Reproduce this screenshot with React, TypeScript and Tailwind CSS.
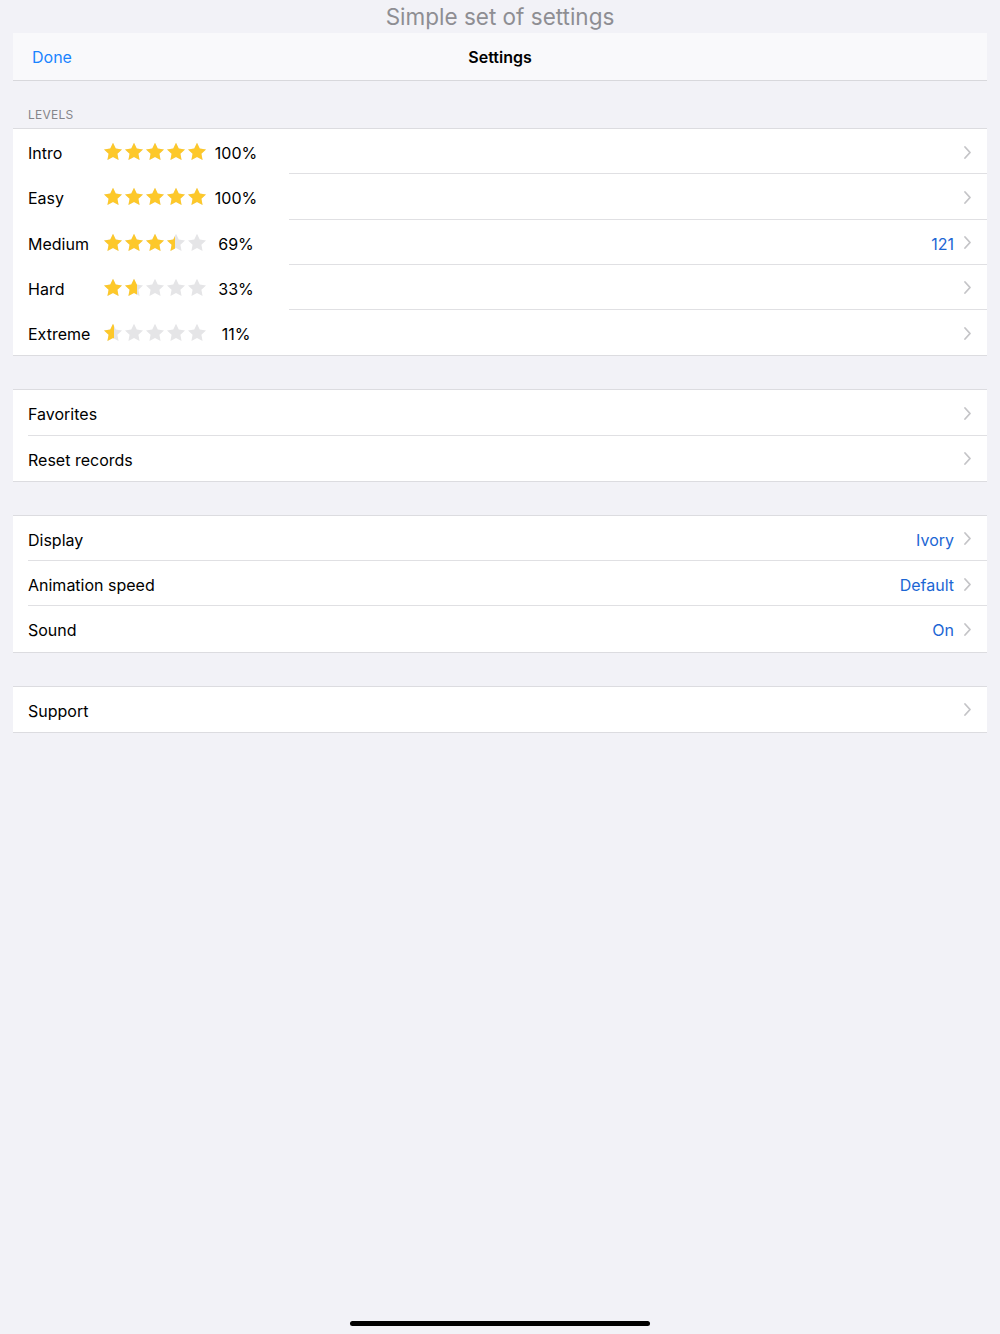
import React from 'react';

const font = { fontFamily: 'Inter, "Noto Sans", "Liberation Sans", sans-serif' };

interface Level {
    name: string;
    pct: number;
    value?: string;
}

const levels: Level[] = [
    { name: 'Intro', pct: 100 },
    { name: 'Easy', pct: 100 },
    { name: 'Medium', pct: 69, value: '121' },
    { name: 'Hard', pct: 33 },
    { name: 'Extreme', pct: 11 },
];

const STAR = 'M12 1l3.3 6.9 7.5 1-5.5 5.2 1.4 7.5L12 18l-6.7 3.6 1.4-7.5L1.2 8.9l7.5-1z';

function Star({ fill }: { fill: number }) {
    return (
        <div className="relative w-[20px] h-[20px]">
            <svg viewBox="0 0 24 24" className="absolute inset-0 w-[20px] h-[20px]">
                <path d={STAR} fill="#e5e5e7" />
            </svg>
            {fill > 0 && (
                <div className="absolute left-0 top-0 h-[20px] overflow-hidden" style={{ width: `${1 + fill * 18}px` }}>
                    <svg viewBox="0 0 24 24" className="w-[20px] h-[20px]">
                        <path d={STAR} fill="#fdc82a" />
                    </svg>
                </div>
            )}
        </div>
    );
}

function Stars({ pct }: { pct: number }) {
    const total = (pct / 100) * 5;
    return (
        <div className="flex items-center gap-[1px] -mt-[2px] -ml-[1px]">
            {[0, 1, 2, 3, 4].map((i) => (
                <Star key={i} fill={Math.max(0, Math.min(1, total - i))} />
            ))}
        </div>
    );
}

function Chevron() {
    return (
        <svg width="9" height="15" viewBox="0 0 9 15" className="shrink-0 -mt-[2px]">
            <path d="M2 2l5 5.5-5 5.5" fill="none" stroke="#c4c4c7" strokeWidth="1.8" strokeLinecap="round" strokeLinejoin="round" />
        </svg>
    );
}

function Row({ children, value, last, inset = 'ml-[15px]' }: { children: React.ReactNode; value?: string; last?: boolean; inset?: string }) {
    return (
        <div className="relative h-[45.25px] flex items-center pl-[15px] pr-[15px] pt-[3px]">
            <div className="flex-1 flex items-center text-[16px] text-black">{children}</div>
            {value && <span className="text-[16px] text-[#1c66d4] mr-[9px]">{value}</span>}
            <Chevron />
            {!last && <div className={`absolute bottom-0 right-0 left-0 h-px bg-[#e0e0e3] ${inset}`} />}
        </div>
    );
}

function Section({ children }: { children: React.ReactNode }) {
    return <div className="bg-white border-t border-b border-[#dcdce0]">{children}</div>;
}

export default function App() {
    return (
        <div className="w-[1000px] h-[1334px] bg-[#f2f2f7] flex flex-col relative" style={font}>
            <div className="h-[33px] flex items-center justify-center text-[22.5px] text-[#8e8e93] leading-none pt-[1px]">
                Simple set of settings
            </div>
            <div className="mx-[13px] flex-1 flex flex-col">
                <div className="h-[48px] bg-[#f9f9fb] border-b border-[#d8d8dc] flex items-center relative pt-[1px]">
                    <span className="absolute left-[19px] text-[16px] text-[#1a84ff]">Done</span>
                    <span className="mx-auto text-[16px] font-semibold text-black">Settings</span>
                </div>

                <div className="h-[47px] flex items-end pl-[15px] pb-[4px] text-[12px] text-[#85858a] tracking-[0.02em]">
                    LEVELS
                </div>
                <Section>
                    {levels.map((l, i) => (
                        <Row key={l.name} value={l.value} last={i === levels.length - 1} inset="ml-[276px]">
                            <span className="w-[76px]">{l.name}</span>
                            <Stars pct={l.pct} />
                            <span className="w-[50px] ml-[4px] text-center">{l.pct}%</span>
                        </Row>
                    ))}
                </Section>

                <div className="h-[33px]" />
                <Section>
                    <Row>Favorites</Row>
                    <Row last>Reset records</Row>
                </Section>

                <div className="h-[33px]" />
                <Section>
                    <Row value="Ivory">Display</Row>
                    <Row value="Default">Animation speed</Row>
                    <Row value="On" last>Sound</Row>
                </Section>

                <div className="h-[33px]" />
                <Section>
                    <Row last>Support</Row>
                </Section>

                <div className="flex-1" />
                <div className="flex justify-center pb-[8px]">
                    <div className="w-[300px] h-[5px] rounded-full bg-black" />
                </div>
            </div>
        </div>
    );
}
